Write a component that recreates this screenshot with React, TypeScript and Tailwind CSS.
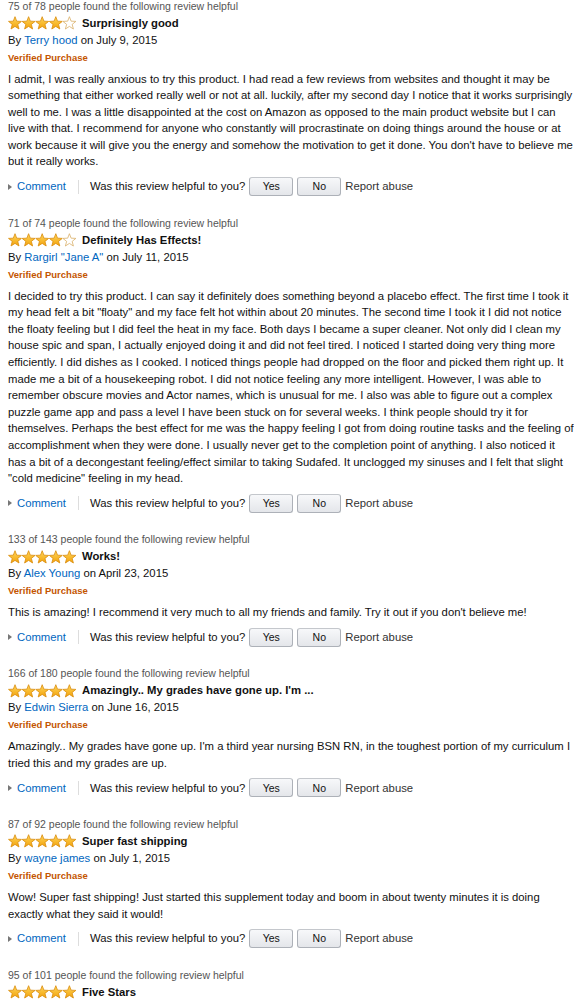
import React from 'react';

interface Review {
  helpful: string;
  rating: number;
  title: string;
  author: string;
  date: string;
  body: string;
}

const reviews: Review[] = [
  {
    helpful: '75 of 78 people found the following review helpful',
    rating: 4,
    title: 'Surprisingly good',
    author: 'Terry hood',
    date: 'July 9, 2015',
    body: "I admit, I was really anxious to try this product. I had read a few reviews from websites and thought it may be something that either worked really well or not at all. luckily, after my second day I notice that it works surprisingly well to me. I was a little disappointed at the cost on Amazon as opposed to the main product website but I can live with that. I recommend for anyone who constantly will procrastinate on doing things around the house or at work because it will give you the energy and somehow the motivation to get it done. You don't have to believe me but it really works.",
  },
  {
    helpful: '71 of 74 people found the following review helpful',
    rating: 4,
    title: 'Definitely Has Effects!',
    author: 'Rargirl "Jane A"',
    date: 'July 11, 2015',
    body: 'I decided to try this product. I can say it definitely does something beyond a placebo effect. The first time I took it my head felt a bit "floaty" and my face felt hot within about 20 minutes. The second time I took it I did not notice the floaty feeling but I did feel the heat in my face. Both days I became a super cleaner. Not only did I clean my house spic and span, I actually enjoyed doing it and did not feel tired. I noticed I started doing very thing more efficiently. I did dishes as I cooked. I noticed things people had dropped on the floor and picked them right up. It made me a bit of a housekeeping robot. I did not notice feeling any more intelligent. However, I was able to remember obscure movies and Actor names, which is unusual for me. I also was able to figure out a complex puzzle game app and pass a level I have been stuck on for several weeks. I think people should try it for themselves. Perhaps the best effect for me was the happy feeling I got from doing routine tasks and the feeling of accomplishment when they were done. I usually never get to the completion point of anything. I also noticed it has a bit of a decongestant feeling/effect similar to taking Sudafed. It unclogged my sinuses and I felt that slight "cold medicine" feeling in my head.',
  },
  {
    helpful: '133 of 143 people found the following review helpful',
    rating: 5,
    title: 'Works!',
    author: 'Alex Young',
    date: 'April 23, 2015',
    body: "This is amazing! I recommend it very much to all my friends and family. Try it out if you don't believe me!",
  },
  {
    helpful: '166 of 180 people found the following review helpful',
    rating: 5,
    title: "Amazingly.. My grades have gone up. I'm ...",
    author: 'Edwin Sierra',
    date: 'June 16, 2015',
    body: "Amazingly.. My grades have gone up. I'm a third year nursing BSN RN, in the toughest portion of my curriculum I tried this and my grades are up.",
  },
  {
    helpful: '87 of 92 people found the following review helpful',
    rating: 5,
    title: 'Super fast shipping',
    author: 'wayne james',
    date: 'July 1, 2015',
    body: 'Wow! Super fast shipping! Just started this supplement today and boom in about twenty minutes it is doing exactly what they said it would!',
  },
];

const STAR = '7,0.7 8.7,5.15 13.47,5.4 9.76,8.4 11,13 7,10.4 3,13 4.24,8.4 0.53,5.4 5.3,5.15';

function Stars({ rating }: { rating: number }) {
  return (
    <svg width="68" height="14" viewBox="0 0 68 14" className="shrink-0">
      <defs>
        <linearGradient id="starFill" x1="0" y1="0" x2="0" y2="1">
          <stop offset="0" stopColor="#ffd75a" />
          <stop offset="1" stopColor="#f2a20c" />
        </linearGradient>
      </defs>
      {[0, 1, 2, 3, 4].map((i) => (
        <polygon
          key={i}
          points={STAR}
          transform={`translate(${i * 13.6} 0)`}
          fill={i < rating ? 'url(#starFill)' : '#ffffff'}
          stroke={i < rating ? '#d98b0b' : '#d9b06a'}
          strokeWidth="0.8"
          strokeLinejoin="round"
        />
      ))}
    </svg>
  );
}

function VoteButton({ label }: { label: string }) {
  return (
    <button className="ml-[4px] w-[44px] h-[19px] rounded-[3px] border border-[#adb1b8] border-t-[#c4c7cc] bg-linear-to-b from-[#f7f8fa] to-[#e4e6ea] text-[10.5px] text-[#111] leading-none">
      {label}
    </button>
  );
}

function ReviewHeader({ review }: { review: Pick<Review, 'helpful' | 'rating' | 'title'> }) {
  return (
    <>
      <div className="h-[17px] leading-[17px] text-[10.5px] text-[#555]">{review.helpful}</div>
      <div className="h-[17px] flex items-center gap-[6px]">
        <Stars rating={review.rating} />
        <span className="text-[11.3px] font-bold text-[#111]">{review.title}</span>
      </div>
    </>
  );
}

function ReviewItem({ review }: { review: Review }) {
  return (
    <div className="mb-[18px]">
      <ReviewHeader review={review} />
      <div className="h-[17px] leading-[17px] text-[11.3px] text-[#111]">
        By <a className="text-[#0066c0]">{review.author}</a> on {review.date}
      </div>
      <div className="h-[17px] leading-[17px] text-[9.5px] font-bold text-[#c45500]">Verified Purchase</div>
      <p className="mt-[5px] w-[566px] text-[11.3px] leading-[16.6px] text-[#111]">{review.body}</p>
      <div className="mt-[6.5px] h-[20px] flex items-center text-[11.3px]">
        <span className="w-0 h-0 border-y-[3px] border-y-transparent border-l-[4px] border-l-[#777]" />
        <a className="ml-[5px] text-[#0066c0]">Comment</a>
        <span className="ml-[12px] w-px h-[14px] bg-[#ddd]" />
        <span className="ml-[11px] text-[#111]">Was this review helpful to you?</span>
        <VoteButton label="Yes" />
        <VoteButton label="No" />
        <a className="ml-[4px] text-[#333]">Report abuse</a>
      </div>
    </div>
  );
}

export default function App() {
  return (
    <div className="bg-white min-h-screen pl-[8px] font-['Liberation_Sans',Arial,sans-serif] overflow-hidden">
      <div className="-mt-[2.5px]">
        {reviews.map((r) => (
          <ReviewItem key={r.author} review={r} />
        ))}
        <ReviewHeader review={{ helpful: '95 of 101 people found the following review helpful', rating: 5, title: 'Five Stars' }} />
      </div>
    </div>
  );
}
